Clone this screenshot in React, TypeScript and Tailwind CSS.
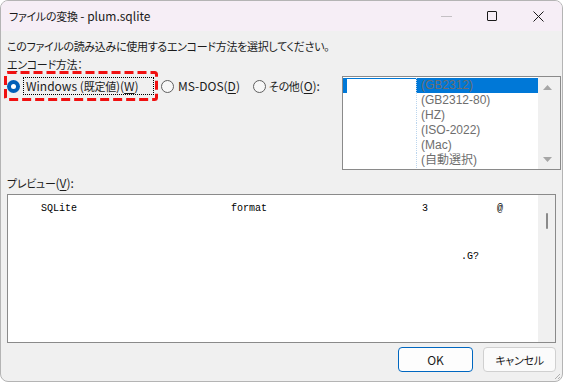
import React from "react";

const FONT = "font-['Noto_Sans_CJK_JP','Noto_Sans',sans-serif] [font-feature-settings:'palt']";
const JA = "text-[11px] tracking-[-0.3px]";

function RadioOn() {
  return (
    <span className="flex items-center justify-center w-[13px] h-[13px] rounded-full bg-[#005fb8] shrink-0">
      <span className="w-[5px] h-[5px] rounded-full bg-white" />
    </span>
  );
}

function RadioOff() {
  return <span className="w-[13px] h-[13px] rounded-full border border-[#5f5f5f] bg-[#f7f7f7] shrink-0" />;
}

const rows = ["(GB2312)", "(GB2312-80)", "(HZ)", "(ISO-2022)", "(Mac)", "(自動選択)"];

export default function App() {
  return (
    <div className={`w-[563px] h-[382px] bg-white text-[12px] leading-[14px] text-[#1b1b1b] ${FONT}`}>
      <div className="w-[563px] h-[382px] flex flex-col rounded-[8px] border border-[#b4b4b4] bg-[#f0f0f0] overflow-hidden">
        {/* Title bar */}
        <div className="h-[30px] shrink-0 flex items-center bg-[#f6eef6]">
          <span className="pl-[8px] text-[#1a1a1a]">
            <span className={JA}>ファイルの変換</span>
            <span className="text-[12px]"> - plum.sqlite</span>
          </span>
          <div className="ml-auto flex items-center h-full">
            <div className="w-[46px] h-full flex items-center justify-center">
              <span className="block w-[11px] h-px bg-[#c4c0c4]" />
            </div>
            <div className="w-[46px] h-full flex items-center justify-center">
              <span className="block w-[10px] h-[10px] border border-[#1a1a1a] rounded-[1px]" />
            </div>
            <div className="w-[46px] h-full flex items-center justify-center mr-[1px]">
              <svg width="11" height="11" viewBox="0 0 11 11">
                <path d="M0.5 0.5 L10.5 10.5 M10.5 0.5 L0.5 10.5" stroke="#1a1a1a" strokeWidth="1" />
              </svg>
            </div>
          </div>
        </div>

        {/* Instruction */}
        <div className={`mt-[8px] pl-[6px] h-[14px] ${JA}`}>
          このファイルの読み込みに使用するエンコード方法を選択してください。
        </div>

        {/* Encoding section */}
        <div className="flex items-start">
          <div className="flex flex-col pl-[6px]">
            <div className={`mt-[4px] h-[14px] ${JA}`}>
              <span className="underline underline-offset-2">エ</span>ンコード方法：
            </div>
            <div className="flex items-center">
              <div className="relative ml-[-3px] h-[30px] w-[154px] flex items-center pl-[3px]">
                <svg className="absolute inset-0 pointer-events-none" width="154" height="30" viewBox="0 0 154 30">
                  <rect x="1.5" y="1.5" width="151" height="27" rx="2" fill="none" stroke="#f01010" strokeWidth="3" strokeDasharray="9 4" />
                </svg>
                <RadioOn />
                <span className="ml-[3px] h-[18px] w-[131px] border border-dotted border-black flex items-center pl-[2px]">
                  Windows (<span className={JA}>既定値</span>)(<span className="underline underline-offset-2">W</span>)
                </span>
              </div>
              <div className="ml-[3px] flex items-center">
                <RadioOff />
                <span className="ml-[4px]">MS-DOS(<span className="underline underline-offset-2">D</span>)</span>
              </div>
              <div className="ml-[13px] flex items-center">
                <RadioOff />
                <span className="ml-[3px]">
                  <span className={JA}>その他</span>(<span className="underline underline-offset-2">O</span>):
                </span>
              </div>
            </div>
          </div>

          {/* Listbox */}
          <div className="ml-auto mr-px mt-[23px] w-[219px] h-[94px] border border-[#8a8a8a] bg-white flex">
            <div className="flex-1 flex flex-col pt-px">
              {rows.map((r, i) => (
                <div key={r} className={`h-[15px] flex ${i === 0 ? "bg-[#0078d7]" : ""}`}>
                  <div className="w-[73px] shrink-0 pl-[4px] flex">
                    <span className={`block w-full bg-white ${i === 0 ? "mt-px" : ""}`} />
                  </div>
                  <span className="flex items-center h-[15px] pl-[4px] border-l border-dotted border-[#bcd6ee] text-[#6e6e6e] font-['Liberation_Sans','Noto_Sans_CJK_JP',sans-serif] text-[12px] leading-[13px]">
                    {r}
                  </span>
                </div>
              ))}
            </div>
            <div className="w-[22px] shrink-0 bg-[#f0f0f0] flex flex-col items-start pl-[5px]">
              <svg className="mt-[8px]" width="9" height="5" viewBox="0 0 9 5">
                <path d="M4.5 0 L9 5 L0 5 Z" fill="#a6a6a6" />
              </svg>
              <svg className="mt-auto mb-[7px]" width="9" height="5" viewBox="0 0 9 5">
                <path d="M0 0 L9 0 L4.5 5 Z" fill="#a6a6a6" />
              </svg>
            </div>
          </div>
        </div>

        {/* Preview label */}
        <div className="mt-[6px] pl-[6px] h-[14px]">
          <span className={JA}>プレビュー</span>(<span className="underline underline-offset-2">V</span>):
        </div>

        {/* Preview box */}
        <div className="mt-[4px] ml-[6px] w-[549px] h-[149px] border border-[#8a8a8a] bg-white flex">
          <div className="flex-1 pt-[8px] font-['Liberation_Mono',monospace] text-[10px] leading-[12px] text-black [font-feature-settings:normal]">
            <div className="flex pl-[33px]">
              <span className="w-[190px]">SQLite</span>
              <span className="w-[191px]">format</span>
              <span className="w-[75px]">3</span>
              <span>@</span>
            </div>
            <div className="flex pl-[453px] mt-[36px]">
              <span>.G?</span>
            </div>
          </div>
          <div className="w-[17px] shrink-0 bg-[#f0f0f0] flex justify-center">
            <span className="block mt-[18px] w-[2px] h-[16px] rounded-full bg-[#8a8a8a]" />
          </div>
        </div>

        {/* Buttons */}
        <div className="mt-[4px] flex justify-end pr-[6px]">
          <button className="w-[75px] h-[25px] rounded-[4px] border border-[#0067c0] bg-[#fdfdfd] text-[12px] text-[#1b1b1b]">
            OK
          </button>
          <button className={`ml-[10px] w-[73px] h-[25px] rounded-[4px] border border-[#d0d0d0] bg-[#fbfbfb] text-[#1b1b1b] ${JA}`}>
            キャンセル
          </button>
        </div>

        {/* Resize grip */}
        <div className="mt-auto flex justify-end">
          <svg width="7" height="7" viewBox="0 0 7 7" className="mr-px mb-px">
            <path d="M6 1 L1 6 M6 4 L4 6" stroke="#b0b0b0" strokeWidth="1" />
          </svg>
        </div>
      </div>
    </div>
  );
}
